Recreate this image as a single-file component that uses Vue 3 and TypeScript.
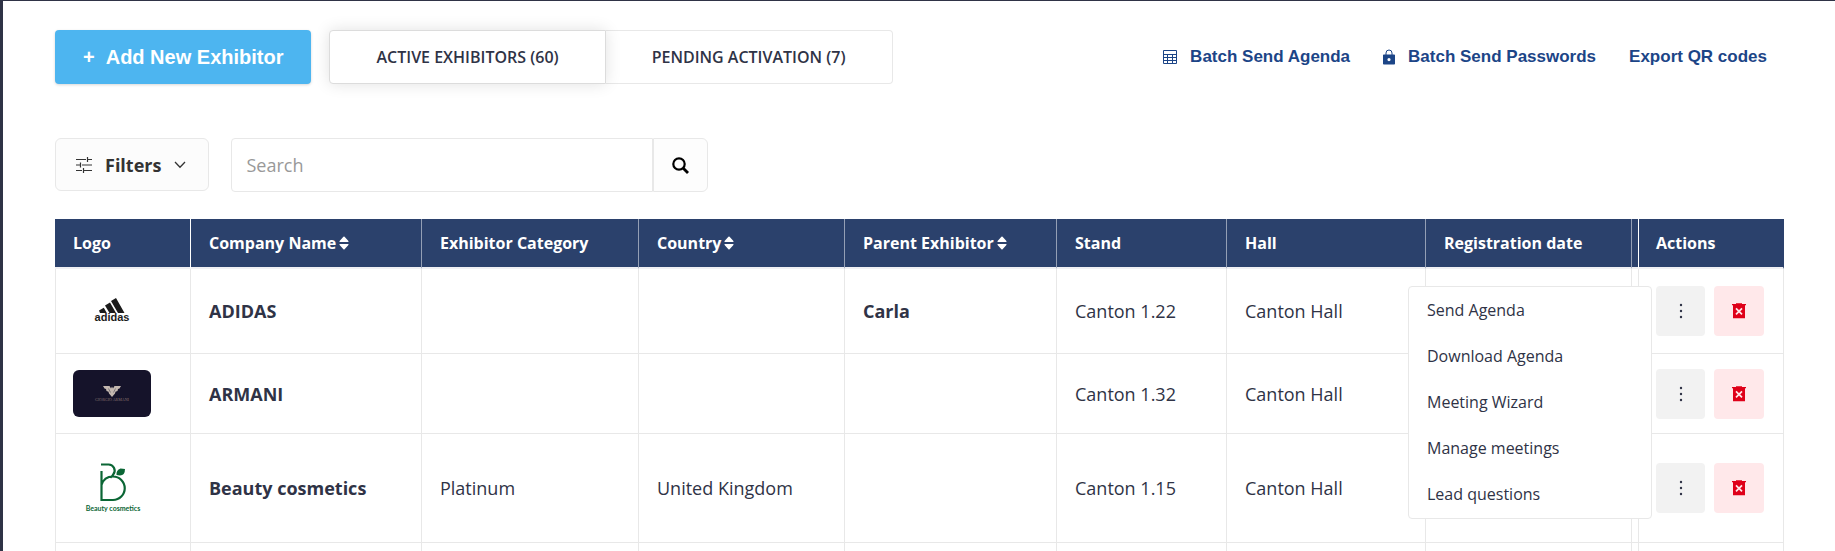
<script setup lang="ts">
import { ref } from 'vue'

interface Column {
  key: string
  label: string
  sortable?: boolean
}

interface Exhibitor {
  id: string
  name: string
  category: string
  country: string
  parent: string
  stand: string
  hall: string
  logo: 'adidas' | 'armani' | 'beauty'
}

const columns: Column[] = [
  { key: 'logo', label: 'Logo' },
  { key: 'name', label: 'Company Name', sortable: true },
  { key: 'category', label: 'Exhibitor Category' },
  { key: 'country', label: 'Country', sortable: true },
  { key: 'parent', label: 'Parent Exhibitor', sortable: true },
  { key: 'stand', label: 'Stand' },
  { key: 'hall', label: 'Hall' },
  { key: 'date', label: 'Registration date' },
  { key: 'spacer', label: '' },
  { key: 'actions', label: 'Actions' },
]

const exhibitors: Exhibitor[] = [
  { id: 'adidas', name: 'ADIDAS', category: '', country: '', parent: 'Carla', stand: 'Canton 1.22', hall: 'Canton Hall', logo: 'adidas' },
  { id: 'armani', name: 'ARMANI', category: '', country: '', parent: '', stand: 'Canton 1.32', hall: 'Canton Hall', logo: 'armani' },
  { id: 'beauty', name: 'Beauty cosmetics', category: 'Platinum', country: 'United Kingdom', parent: '', stand: 'Canton 1.15', hall: 'Canton Hall', logo: 'beauty' },
]

const menuItems = ['Send Agenda', 'Download Agenda', 'Meeting Wizard', 'Manage meetings', 'Lead questions']

const search = ref('')
const activeTab = ref('active')
const openMenu = ref('adidas')

function toggleMenu(id: string) {
  openMenu.value = openMenu.value === id ? '' : id
}
</script>

<template>
  <main class="page">
    <div class="topbar">
      <button class="add" type="button"><span class="plus">+</span>Add New Exhibitor</button>
      <div class="tabs">
        <button class="tab" :class="{ current: activeTab === 'active' }" type="button" @click="activeTab = 'active'">ACTIVE EXHIBITORS (60)</button>
        <button class="tab" :class="{ current: activeTab === 'pending' }" type="button" @click="activeTab = 'pending'">PENDING ACTIVATION (7)</button>
      </div>
      <nav class="links">
        <a href="#agenda">
          <svg width="14" height="14" viewBox="0 0 14 14" fill="none" stroke="currentColor" aria-hidden="true">
            <path d="M.5.5h13v13H.5zM.5 4.5h13M.5 7.5h13M.5 10.5h13M4.5 4.5v9M9.5 4.5v9" />
          </svg>Batch Send Agenda</a>
        <a href="#passwords">
          <svg width="12" height="16" viewBox="0 0 12 16" aria-hidden="true">
            <path d="M3 6V4a3 3 0 0 1 6 0v2" fill="none" stroke="currentColor" />
            <path fill="currentColor" fill-rule="evenodd" d="M.8 5.5h10.4q.8 0 .8.8v8.4q0 .8-.8.8H.8q-.8 0-.8-.8V6.300q0-.8.8-.8zM6 9a1.600 1.600 0 1 0 0 3.200A1.600 1.600 0 1 0 6 9z" />
          </svg>Batch Send Passwords</a>
        <a href="#qr">Export QR codes</a>
      </nav>
    </div>

    <div class="toolbar">
      <button class="filters" type="button">
        <svg width="16" height="16" viewBox="0 0 16 16" fill="none" stroke="currentColor" stroke-width="1.200" aria-hidden="true">
          <path d="M0 2.500h10M12 2.500h4M11.500 0v5M0 8h4M6 8h10M4.500 5.500v5M0 13.500h6M8 13.500h8M7.500 11v5" />
        </svg>
        Filters
        <svg class="chevron" width="12" height="8" viewBox="0 0 12 8" fill="none" stroke="currentColor" stroke-width="1.300" aria-hidden="true">
          <path d="M1 1l5 5.200L11 1" />
        </svg>
      </button>
      <form class="search" @submit.prevent>
        <input v-model="search" type="text" placeholder="Search" aria-label="Search" />
        <button type="submit" aria-label="Search exhibitors">
          <svg width="17" height="17" viewBox="0 0 17 17" fill="none" stroke="currentColor" stroke-width="2.200" aria-hidden="true">
            <circle cx="7" cy="7" r="5.700" />
            <path d="M11 11l5 5" stroke-width="2.800" />
          </svg>
        </button>
      </form>
    </div>

    <table class="grid">
      <colgroup>
        <col v-for="col in columns" :key="col.key" :class="'col-' + col.key" />
      </colgroup>
      <thead>
        <tr>
          <th v-for="col in columns" :key="col.key" scope="col" :class="'head-' + col.key">
            {{ col.label }}<svg v-if="col.sortable" class="sort" width="10" height="14" viewBox="0 0 10 14" fill="currentColor" aria-hidden="true">
              <path d="M1 6h8q1 0 .4-.9L5.600.7Q5 .1 4.400.7L.6 5.100Q0 6 1 6zM1 8h8q1 0 .4.900L5.600 13.300q-.6.600-1.200 0L.6 8.900Q0 8 1 8z" />
            </svg>
          </th>
        </tr>
      </thead>
      <tbody>
        <tr v-for="row in exhibitors" :key="row.id" :class="'row-' + row.logo">
          <td>
            <svg v-if="row.logo === 'adidas'" class="logo" width="78" height="48" viewBox="0 0 78 48" role="img" aria-label="adidas">
              <g fill="#1b1b1b">
                <path d="M38 14l5-3 8.500 15h-6.500zM32 18.500l5-3 6 10.500h-6.500zM26 23.500l4.800-2.800 3 5.300h-6.800z" />
                <text x="39" y="34" text-anchor="middle" class="adidas-text">adidas</text>
              </g>
            </svg>
            <svg v-else-if="row.logo === 'armani'" class="logo" width="78" height="47" viewBox="0 0 78 47" role="img" aria-label="Giorgio Armani">
              <rect width="78" height="47" rx="6" fill="#15132a" />
              <path fill="#c4b8b0" d="M30 16h6.500l1.500 2.500L39 16.500l1 2 1.500-2.500H48l-1.500 2.500-1.500.5-.5 2-2 .8-.5 1.700-3 3.500-3-3.500-.5-1.700-2-.8-.5-2-1.500-.5z" />
              <path d="M35.500 18.500l2 4M42.500 18.500l-2 4" stroke="#15132a" stroke-width=".4" />
              <text x="39" y="31" text-anchor="middle" class="armani-text">GIORGIO ARMANI</text>
            </svg>
            <svg v-else class="logo" width="78" height="60" viewBox="0 0 78 60" role="img" aria-label="Beauty cosmetics">
              <g fill="none" stroke="#0b6635" stroke-width="2.200">
                <path d="M28 6.500h7.500a6 6 0 0 1 5 9.500q-1 2.500-3 3.500M28.500 13v29h11.500a11.500 11.500 0 0 0 0-23.500q-9 0-11.500 8.500" />
              </g>
              <path fill="#0b6635" d="M43.500 17q-.5-5 4-6.500l4.500.5q0 6.500-5 6.500z" />
              <text x="40" y="53" text-anchor="middle" class="beauty-text">Beauty cosmetics</text>
            </svg>
          </td>
          <td class="strong">{{ row.name }}</td>
          <td>{{ row.category }}</td>
          <td>{{ row.country }}</td>
          <td class="strong">{{ row.parent }}</td>
          <td>{{ row.stand }}</td>
          <td>{{ row.hall }}</td>
          <td></td>
          <td></td>
          <td>
            <div class="actions">
              <button class="more" type="button" aria-label="More actions" @click="toggleMenu(row.id)">
                <svg width="4" height="16" viewBox="0 0 4 16" fill="currentColor" aria-hidden="true">
                  <circle cx="2" cy="2" r="1.200" /><circle cx="2" cy="8" r="1.200" /><circle cx="2" cy="14" r="1.200" />
                </svg>
              </button>
              <button class="delete" type="button" aria-label="Delete">
                <svg width="14" height="16" viewBox="0 0 14 16" aria-hidden="true">
                  <path fill="#df0019" d="M4 .3h6V1h4v1.200h-1v13H1v-13H0V1h4z" />
                  <path d="M4 5.300l6 6M10 5.300l-6 6" stroke="#ffe8ea" stroke-width="1.700" />
                </svg>
              </button>
              <ul v-if="openMenu === row.id" class="menu">
                <li v-for="item in menuItems" :key="item"><button type="button">{{ item }}</button></li>
              </ul>
            </div>
          </td>
        </tr>
        <tr class="row-next"><td v-for="col in columns" :key="col.key"></td></tr>
      </tbody>
    </table>
  </main>
</template>

<style>
body {
  margin: 0;
  background: #fff;
}
</style>

<style scoped>
* {
  box-sizing: border-box;
}

.page {
  height: 100vh;
  overflow: auto;
  scrollbar-width: none;
  padding: 29px 51px 0 52px;
  border-top: 1px solid #2f3346;
  border-left: 3px solid #2f3346;
  color: #2f3346;
  font-family: "Open Sans", "Noto Sans", sans-serif;
  font-size: 18px;
}

button {
  font: inherit;
  color: inherit;
  cursor: pointer;
}

.topbar {
  display: flex;
  align-items: center;
  gap: 18px;
}

.add {
  height: 54px;
  padding: 0 28px;
  border: 0;
  border-radius: 4px;
  background: #4db5f0;
  box-shadow: 0 1px 3px rgba(0, 0, 0, 0.16);
  color: #fff;
  font: bold 20px "Liberation Sans", Arial, sans-serif;
  white-space: nowrap;
}

.plus {
  margin-right: 11px;
}

.tabs {
  display: flex;
}

.tab {
  height: 54px;
  padding: 0 46px;
  border: 1px solid #e8e8e8;
  border-left: 0;
  border-radius: 0 4px 4px 0;
  background: #fff;
  font-size: 16px;
  font-weight: 600;
  white-space: nowrap;
}

.tab:first-child {
  border-left: 1px solid #dcdcdc;
  border-radius: 4px 0 0 4px;
}

.tab.current {
  z-index: 1;
  border-color: #dcdcdc;
  box-shadow: 0 0 16px rgba(0, 0, 0, 0.12);
}

.links {
  display: flex;
  gap: 33px;
  margin-left: auto;
  padding-right: 17px;
}

.links a {
  display: flex;
  align-items: center;
  gap: 13px;
  color: #1c4587;
  font: bold 17px "Liberation Sans", Arial, sans-serif;
  text-decoration: none;
  white-space: nowrap;
}

.toolbar {
  display: flex;
  align-items: flex-start;
  gap: 22px;
  margin: 54px 0 27px;
}

.filters {
  display: flex;
  align-items: center;
  gap: 13px;
  height: 53px;
  padding: 0 22px 0 20px;
  border: 1px solid #e8e8e8;
  border-radius: 6px;
  background: #fcfcfc;
  color: #333;
  font-weight: 700;
}

.search {
  display: flex;
  width: 477px;
}

.search input {
  flex: 1;
  min-width: 0;
  height: 54px;
  padding: 0 14px;
  border: 1px solid #e8e8e8;
  border-radius: 4px 0 0 4px;
  outline: 0;
  background: #fff;
  color: inherit;
  font: inherit;
}

.search input::placeholder {
  color: #999;
  opacity: 1;
}

.search button {
  display: flex;
  align-items: center;
  justify-content: center;
  width: 55px;
  padding: 0;
  border: 1px solid #e8e8e8;
  border-radius: 0 6px 6px 0;
  background: #fdfdfd;
  color: #000;
}

.grid {
  width: 100%;
  table-layout: fixed;
  border-collapse: separate;
  border-spacing: 0;
}

.col-logo { width: 136px; }
.col-name { width: 231px; }
.col-category { width: 217px; }
.col-country { width: 206px; }
.col-parent { width: 212px; }
.col-stand { width: 170px; }
.col-hall { width: 199px; }
.col-date { width: 206px; }
.col-spacer { width: 7px; }
.col-actions { width: 145px; }

th {
  height: 50px;
  padding: 0 18px;
  border-right: 1px solid #949fb5;
  border-bottom: 2px solid #f0f0f4;
  background: #2b416c;
  background-clip: padding-box;
  color: #fff;
  font-size: 16px;
  font-weight: 700;
  text-align: left;
  white-space: nowrap;
}

.head-logo,
.head-spacer {
  border-right-color: #fff;
}

.head-actions {
  border-right-color: #2b416c;
}

th:first-child,
td:first-child {
  padding-left: 18px;
}

th:last-child,
td:last-child {
  padding: 0 17px;
}

.head-spacer,
td:nth-child(9) {
  padding: 0;
}

.sort {
  margin-left: 3px;
  vertical-align: -1px;
}

td {
  padding: 0 18px;
  border-right: 1px solid #e8e8e8;
  border-bottom: 1px solid #e8e8e8;
  white-space: nowrap;
}

td:first-child {
  padding-left: 17px;
  border-left: 1px solid #e8e8e8;
}

.strong {
  font-weight: 700;
}

.row-adidas { height: 85px; }
.row-armani { height: 80px; }
.row-beauty { height: 109px; }
.row-next { height: 80px; }

.logo {
  display: block;
}

.adidas-text {
  font: bold 11px "Liberation Sans", Arial, sans-serif;
}

.armani-text {
  fill: #8a7470;
  font: 4px "Liberation Serif", serif;
}

.beauty-text {
  fill: #0b6635;
  font: bold 7px Lato, sans-serif;
}

.actions {
  position: relative;
  display: flex;
  gap: 9px;
  width: 108px;
}

.more,
.delete {
  display: flex;
  align-items: center;
  justify-content: center;
  width: 49px;
  height: 50px;
  padding: 0;
  border: 0;
  border-radius: 4px;
  background: #f2f2f2;
}

.delete {
  width: 50px;
  background: #ffe8ea;
}

.menu {
  position: absolute;
  top: 0;
  right: calc(100% + 4px);
  z-index: 2;
  width: 244px;
  margin: 0;
  padding: 0 0 1px;
  border: 1px solid #e8e8e8;
  border-radius: 4px;
  background: #fff;
  list-style: none;
}

.menu button {
  display: block;
  width: 100%;
  padding: 12px 18px;
  border: 0;
  background: none;
  font-size: 16px;
  line-height: 22px;
  text-align: left;
}
</style>
